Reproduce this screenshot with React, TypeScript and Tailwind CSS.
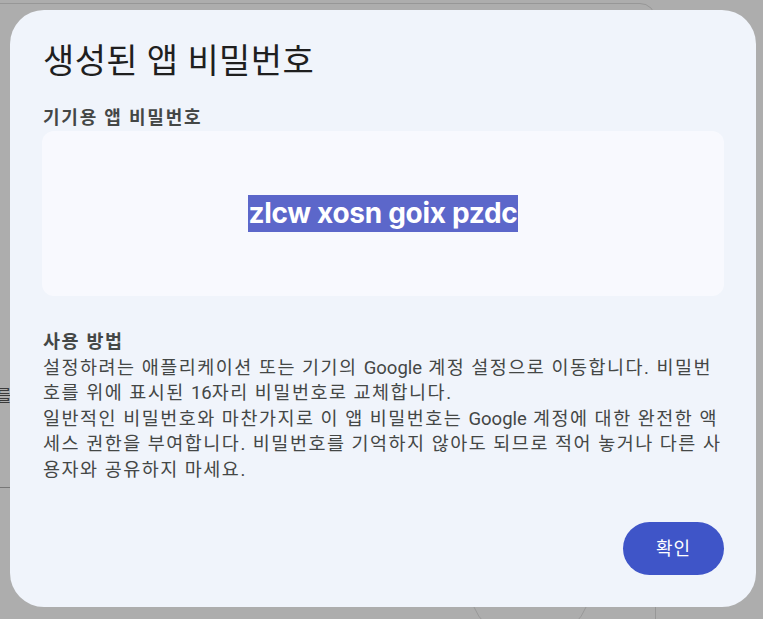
export default function App() {
  return (
    <div className="relative h-[619px] w-full overflow-hidden bg-[#adadad] p-[10px] font-['Roboto','Noto_Sans_CJK_KR',sans-serif]">
      {/* dimmed page behind the dialog */}
      <div className="absolute left-[-20px] top-[3px] h-[700px] w-[676px] rounded-[16px] border border-[#979797]" />
      <div className="absolute left-[-4px] top-[386px] text-[17px] leading-[20px] text-[#3a3a3a]">를</div>
      <div className="absolute left-0 top-[487px] h-px w-[12px] bg-[#777]" />
      <div className="absolute left-[468px] top-[520px] h-[124px] w-[124px] rounded-full border border-[#999]" />

      {/* dialog */}
      <div className="relative flex h-[597px] w-[746px] flex-col rounded-[34px] bg-[#f0f4fb] px-8 pt-[30px]">
        <h1 className="pl-px text-[34px] font-normal leading-[42px] tracking-[0.4px] text-[#1f1f1f]">
          생성된 앱 비밀번호
        </h1>

        <h2 className="mt-[24px] pl-px text-[18px] font-bold leading-[24px] tracking-[1.8px] text-[#444746]">
          기기용 앱 비밀번호
        </h2>

        <div className="mt-[1px] flex h-[165px] items-center justify-center rounded-[12px] bg-[#f8f9fe]">
          <span className="bg-[#5c67ca] font-['Inter',sans-serif] text-[28px] font-bold leading-[37px] tracking-[-0.3px] text-white">
            zlcw xosn goix pzdc
          </span>
        </div>

        <div className="mt-[34px] pl-px text-[18.5px] leading-[25.5px] tracking-[1.5px] text-[#444746]">
          <p className="font-bold tracking-[1.6px]">사용 방법</p>
          <p>
            설정하려는 애플리케이션 또는 기기의 <span className="tracking-normal">Google</span> 계정 설정으로 이동합니다. 비밀번호를 위에 표시된 <span className="tracking-normal">16</span>자리 비밀번호로 교체합니다.
          </p>
          <p>
            일반적인 비밀번호와 마찬가지로 이 앱 비밀번호는 <span className="tracking-normal">Google</span> 계정에 대한 완전한 액세스 권한을 부여합니다. 비밀번호를 기억하지 않아도 되므로 적어 놓거나 다른 사용자와 공유하지 마세요.
          </p>
        </div>

        <div className="mt-auto flex justify-end pb-[32px]">
          <button className="h-[53px] w-[101px] rounded-full bg-[#3f55c8] text-[18px] tracking-[1px] text-white">
            확인
          </button>
        </div>
      </div>
    </div>
  );
}
